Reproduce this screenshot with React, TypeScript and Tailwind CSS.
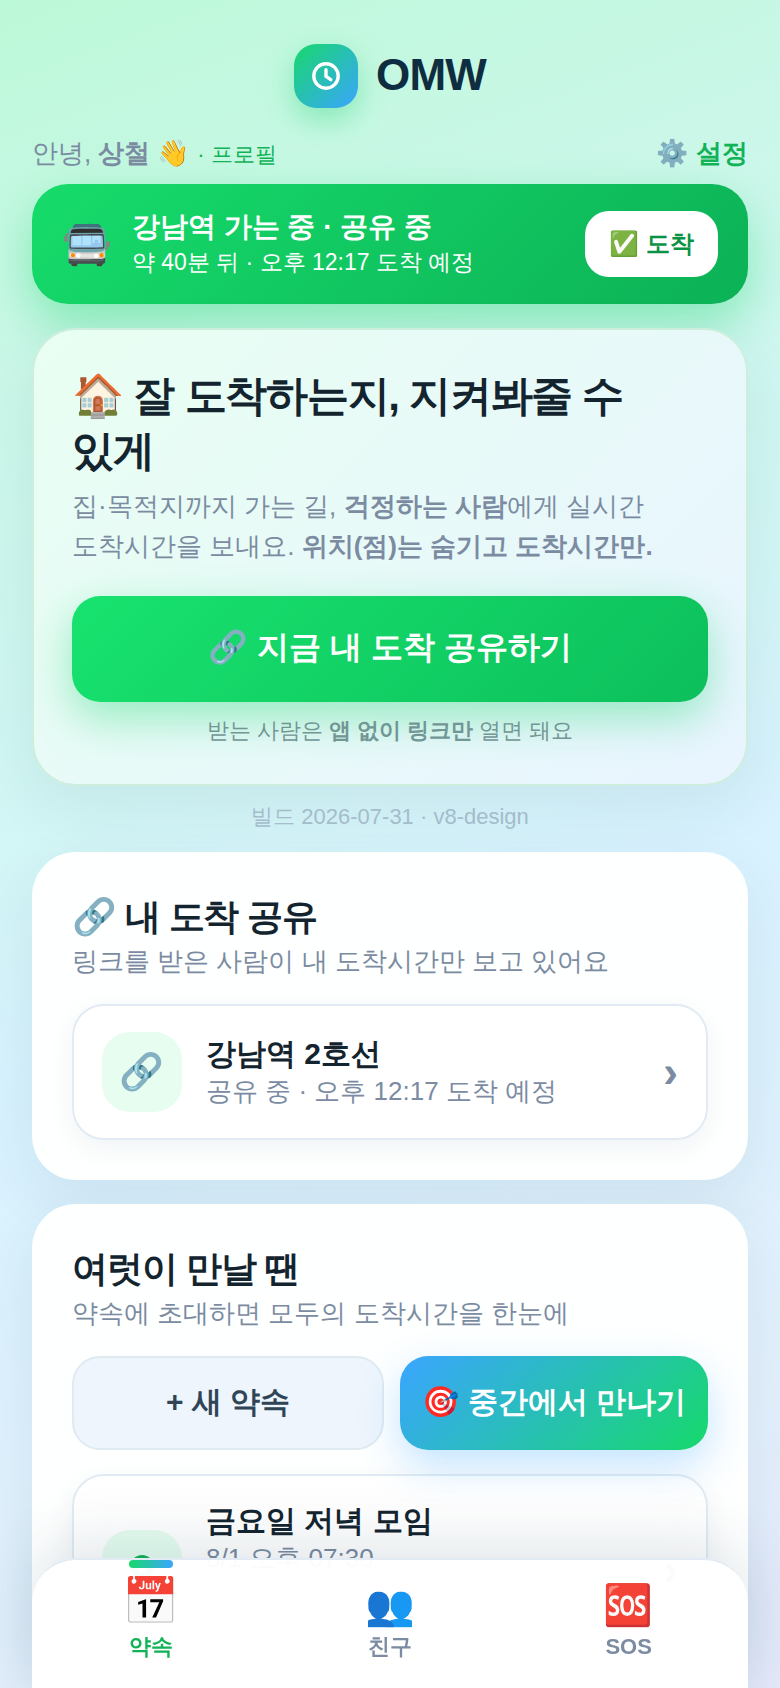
import type { ReactNode } from "react";
import clsx from "clsx";

interface ListCardProps {
    icon: ReactNode;
    title: string;
    subtitle: string;
    children?: ReactNode;
}

interface Tab {
    icon: string;
    label: string;
}

const tabs: Tab[] = [
    { icon: "📅", label: "약속" },
    { icon: "👥", label: "친구" },
    { icon: "🆘", label: "SOS" },
];

function ClockIcon() {
    return (
        <svg viewBox="0 0 28 28" className="w-7 h-7" fill="none" stroke="white" strokeLinecap="round" strokeLinejoin="round" aria-hidden="true">
            <circle cx="14" cy="14" r="12.2" strokeWidth="3.4" />
            <path d="M14 7.8v6.6l4.8 3.2" strokeWidth="3.4" />
        </svg>
    );
}

function PinIcon() {
    return (
        <svg viewBox="0 0 24 30" className="w-6 h-[30px]" aria-hidden="true">
            <path fill="#12b357" d="M12 0a12 12 0 0 0-12 12c0 8 12 18 12 18s12-10 12-18a12 12 0 0 0-12-12z" />
            <circle cx="12" cy="12" r="5" fill="white" />
        </svg>
    );
}

function ListCard({ icon, title, subtitle, children }: ListCardProps) {
    return (
        <a
            href="#detail"
            className="flex items-center gap-6 mt-6 px-7 py-[26px] bg-white/80 rounded-[32px] border-2 border-[#e2ebf3] shadow-[0_8px_28px_rgba(20,60,80,0.06)]"
        >
            <span className="flex items-center justify-center w-20 h-20 shrink-0 rounded-[28px] bg-[#e6fdf0] text-[36px]">
                {icon}
            </span>
            <span className="flex-1 min-w-0">
                <span className="block text-[30px] leading-[38px] font-bold text-[#14242f]">{title}</span>
                <span className="block text-[26px] leading-9">{subtitle}</span>
                {children}
            </span>
            <span className="text-[44px] leading-none font-bold">›</span>
        </a>
    );
}

export default function App() {
    return (
        <div className="min-h-screen px-8 pt-11 pb-44 font-['Liberation_Sans','Noto_Color_Emoji',sans-serif] text-[#7b8ba1] bg-fixed bg-[linear-gradient(160deg,#bcf9d8_0%,#cbf7e9_20%,#d2f6f5_42%,#d8f2ff_56%,#e2f0fc_82%,#e5eafb_100%)]">
            <header className="flex items-center justify-center gap-[18px]">
                <span className="flex items-center justify-center w-16 h-16 rounded-[22px] bg-[linear-gradient(135deg,#17d86b,#3aa5ff)] shadow-[0_12px_28px_rgba(24,210,106,0.35)]">
                    <ClockIcon />
                </span>
                <h1 className="pb-0.5 text-[44px] leading-[52px] font-bold tracking-[-0.02em] text-[#0f2d40]">OMW</h1>
            </header>

            <div className="flex items-center justify-between h-[42px] mt-6 mb-[10px]">
                <p className="text-[26px]">
                    안녕, <b>상철</b> 👋{" "}
                    <a href="#profile" className="text-[22px] text-[#12b357]">· 프로필</a>
                </p>
                <a href="#settings" className="text-[26px] font-bold text-[#12b357]">⚙️ 설정</a>
            </div>

            <section className="flex items-center gap-5 h-[120px] px-[30px] rounded-[36px] text-white bg-[linear-gradient(135deg,#16dc6b,#0cb156)] shadow-[0_20px_48px_rgba(24,216,107,0.4)]">
                <span className="text-[40px]">🚍</span>
                <div className="flex-1 min-w-0">
                    <p className="text-[28px] leading-9 font-bold">강남역 가는 중 · 공유 중</p>
                    <p className="text-[23px] leading-[34px]">약 40분 뒤 · 오후 12:17 도착 예정</p>
                </div>
                <button type="button" className="h-[66px] px-6 rounded-3xl bg-white text-[24px] font-bold text-[#0a9245]">
                    ✅ 도착
                </button>
            </section>

            <section className="mt-6 px-[38px] pt-[38px] pb-9 rounded-[44px] border-2 border-[#cdeedd] bg-[linear-gradient(135deg,#e8fff2,#e8f4ff)] shadow-[0_20px_60px_rgba(20,60,80,0.08)]">
                <h2 className="text-[42px] leading-[55px] font-bold tracking-[-0.03em] break-keep text-[#14242f]">
                    🏠 잘 도착하는지, 지켜봐줄 수 있게
                </h2>
                <p className="mt-2 text-[26px] leading-10 break-keep">
                    집·목적지까지 가는 길, <b>걱정하는 사람</b>에게 실시간 도착시간을 보내요. <b>위치(점)는 숨기고 도착시간만.</b>
                </p>
                <button type="button" className="w-full h-[106px] mt-[30px] pb-1 rounded-[28px] text-[32px] font-bold text-white bg-[linear-gradient(135deg,#18e36f,#0cbf5b)] shadow-[0_16px_44px_rgba(24,216,107,0.4)]">
                    🔗 지금 내 도착 공유하기
                </button>
                <p className="mt-3 text-center text-[22px] leading-[34px] text-[#719795]">
                    받는 사람은 <b>앱 없이 링크만</b> 열면 돼요
                </p>
            </section>

            <p className="mt-[14px] mb-[18px] text-center text-[22px] leading-[34px] text-[#a5bccb]">빌드 2026-07-31 · v8-design</p>

            <section className="p-10 rounded-[44px] bg-white/97 shadow-[0_20px_60px_rgba(20,60,80,0.08)]">
                <h2 className="text-[36px] leading-[50px] font-bold tracking-[-0.03em] text-[#14242f]">🔗 내 도착 공유</h2>
                <p className="text-[26px] leading-[38px]">링크를 받은 사람이 내 도착시간만 보고 있어요</p>
                <ListCard icon="🔗" title="강남역 2호선" subtitle="공유 중 · 오후 12:17 도착 예정" />
            </section>

            <section className="mt-6 p-10 rounded-[44px] bg-white/97 shadow-[0_20px_60px_rgba(20,60,80,0.08)]">
                <h2 className="text-[36px] leading-[50px] font-bold tracking-[-0.03em] text-[#14242f]">여럿이 만날 땐</h2>
                <p className="text-[26px] leading-[38px]">약속에 초대하면 모두의 도착시간을 한눈에</p>
                <div className="flex gap-4 mt-6">
                    <button type="button" className="flex-1 h-[94px] pb-1 rounded-[28px] border-2 border-[#e0eaf1] bg-[#eef5fc] text-[30px] font-bold text-[#2f4557]">
                        + 새 약속
                    </button>
                    <button type="button" className="flex-1 h-[94px] pb-1 rounded-[28px] text-[30px] font-bold text-white whitespace-nowrap bg-[linear-gradient(135deg,#3aa5ff,#16d96b)] shadow-[0_16px_40px_rgba(58,165,255,0.3)]">
                        🎯 중간에서 만나기
                    </button>
                </div>
                <ListCard icon={<PinIcon />} title="금요일 저녁 모임" subtitle="8/1 오후 07:30">
                    <span className="flex gap-2 h-11 mt-[18px]">
                        <span className="size-11 rounded-full bg-[#e6fdf0]" />
                        <span className="size-11 rounded-full bg-[#e8f4ff]" />
                    </span>
                </ListCard>
            </section>

            <nav className="fixed inset-x-8 bottom-0 flex h-[130px] rounded-t-[44px] border-t-2 border-[#e2ebf3] bg-white/97 shadow-[0_-16px_60px_rgba(20,60,80,0.12)]">
                {tabs.map((tab, i) => (
                    <a
                        key={tab.label}
                        href={`#tab-${i}`}
                        className={clsx("relative flex flex-1 flex-col items-center pt-5 text-[22px] font-bold", i === 0 && "text-[#12b357]")}
                    >
                        {i === 0 && <span className="absolute top-0 w-11 h-2 rounded-full bg-[linear-gradient(90deg,#17d86b,#3aa5ff)]" />}
                        <span className={clsx("h-[50px] leading-[50px] font-normal", i === 0 ? "-mt-1 mb-1 text-[46px]" : "text-[40px]")}>{tab.icon}</span>
                        <span className="leading-normal">{tab.label}</span>
                    </a>
                ))}
            </nav>
        </div>
    );
}
